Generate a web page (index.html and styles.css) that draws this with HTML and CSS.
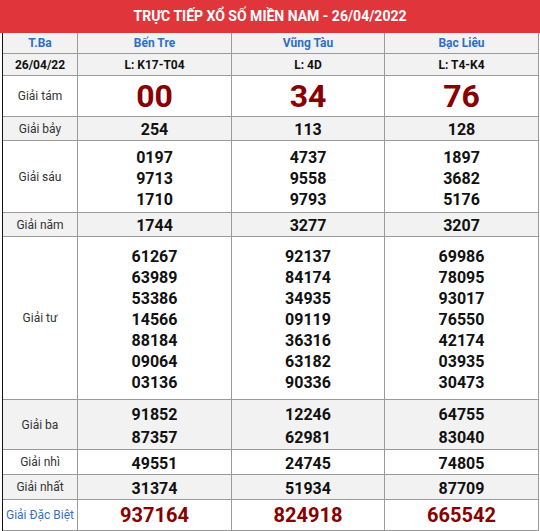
FILE: index.html
```html
<!DOCTYPE html>
<html lang="vi">
<head>
<meta charset="utf-8">
<title>XSMN</title>
<link rel="stylesheet" href="styles.css">
</head>
<body>
<div class="box">
  <div class="title">TRỰC TIẾP XỔ SỐ MIỀN NAM - 26/04/2022</div>
  <div class="wrap">
    <table class="kq">
      <colgroup><col class="c1"><col class="c2"><col class="c3"><col class="c4"></colgroup>
      <tr class="r-head gray">
        <td class="day">T.Ba</td>
        <td class="prov">Bến Tre</td>
        <td class="prov">Vũng Tàu</td>
        <td class="prov">Bạc Liêu</td>
      </tr>
      <tr class="r-code gray">
        <td class="bold">26/04/22</td>
        <td class="bold">L: K17-T04</td>
        <td class="bold">L: 4D</td>
        <td class="bold">L: T4-K4</td>
      </tr>
      <tr class="r-8">
        <td class="lbl">Giải tám</td>
        <td class="big">00</td>
        <td class="big">34</td>
        <td class="big">76</td>
      </tr>
      <tr class="r-7 gray">
        <td class="lbl">Giải bảy</td>
        <td class="num">254</td>
        <td class="num">113</td>
        <td class="num">128</td>
      </tr>
      <tr class="r-6">
        <td class="lbl">Giải sáu</td>
        <td class="num"><div>0197</div><div>9713</div><div>1710</div></td>
        <td class="num"><div>4737</div><div>9558</div><div>9793</div></td>
        <td class="num"><div>1897</div><div>3682</div><div>5176</div></td>
      </tr>
      <tr class="r-5 gray">
        <td class="lbl">Giải năm</td>
        <td class="num">1744</td>
        <td class="num">3277</td>
        <td class="num">3207</td>
      </tr>
      <tr class="r-4">
        <td class="lbl">Giải tư</td>
        <td class="num"><div>61267</div><div>63989</div><div>53386</div><div>14566</div><div>88184</div><div>09064</div><div>03136</div></td>
        <td class="num"><div>92137</div><div>84174</div><div>34935</div><div>09119</div><div>36316</div><div>63182</div><div>90336</div></td>
        <td class="num"><div>69986</div><div>78095</div><div>93017</div><div>76550</div><div>42174</div><div>03935</div><div>30473</div></td>
      </tr>
      <tr class="r-3 gray">
        <td class="lbl">Giải ba</td>
        <td class="num ba"><div>91852</div><div>87357</div></td>
        <td class="num ba"><div>12246</div><div>62981</div></td>
        <td class="num ba"><div>64755</div><div>83040</div></td>
      </tr>
      <tr class="r-2">
        <td class="lbl">Giải nhì</td>
        <td class="num">49551</td>
        <td class="num">24745</td>
        <td class="num">74805</td>
      </tr>
      <tr class="r-1 gray">
        <td class="lbl">Giải nhất</td>
        <td class="num">31374</td>
        <td class="num">51934</td>
        <td class="num">87709</td>
      </tr>
      <tr class="r-db">
        <td class="lbl blue">Giải Đặc Biệt</td>
        <td class="db">937164</td>
        <td class="db">824918</td>
        <td class="db">665542</td>
      </tr>
    </table>
  </div>
</div>
</body>
</html>
```
FILE: styles.css
```css
html, body {
  margin: 0;
  padding: 0;
  background: #fff;
}
body {
  font-family: Roboto, "Liberation Sans", Arial, sans-serif;
  color: #222;
}
.box {
  width: 540px;
}
.title {
  height: 33px;
  line-height: 33px;
  background: #e0363b;
  color: #fff;
  font-weight: bold;
  font-size: 14px;
  text-align: center;
}
.wrap {
  margin-left: 2px;
  border-left: 1px solid #111;
  padding-bottom: 3px;
}
.kq {
  border-collapse: separate;
  border-spacing: 0;
  table-layout: fixed;
  width: 536px;
}
.c1 { width: 75px; }
.c2 { width: 154px; }
.c3 { width: 153px; }
.c4 { width: 154px; }
.kq td {
  border-right: 1px solid #9a9a9a;
  border-bottom: 1px solid #9a9a9a;
  text-align: center;
  vertical-align: middle;
  padding: 0;
  font-size: 12px;
}
.gray td { background: #f2f2f2; }
.r-head td { height: 20px; }
.r-code td { height: 21px; }
.r-8 td { height: 40px; }
.r-7 td { height: 23px; }
.r-6 td { height: 71px; }
.r-5 td { height: 23px; }
.r-4 td { height: 162px; }
.r-3 td { height: 46px; }
.r-2 td { height: 24px; }
.r-1 td { height: 24px; }
.r-db td { height: 30px; }
.kq td.num {
  padding-top: 3px;
  font-size: 16px;
  font-weight: bold;
  color: #111;
  line-height: 21px;
}
.kq .r-7 td.num, .kq .r-5 td.num { height: 20px; line-height: 20px; }
.kq .r-6 td.num { height: 68px; }
.kq .r-4 td.num { height: 159px; }
.kq .r-3 td.num { height: 43px; line-height: 23px; }
.kq .r-2 td.num, .kq .r-1 td.num { height: 21px; }
.day {
  color: #2f6fc4;
  font-weight: bold;
}
.prov {
  color: #2f6fc4;
  font-weight: bold;
}
.kq td.bold {
  font-weight: bold;
  color: #111;
}
.lbl {
  color: #333;
}
.kq td.blue {
  color: #3a6fc6;
}
.kq td.big {
  font-size: 32px;
  font-weight: bold;
  color: #880000;
  line-height: 36px;
}
.kq td.db {
  font-size: 20px;
  font-weight: bold;
  color: #880000;
}
```
